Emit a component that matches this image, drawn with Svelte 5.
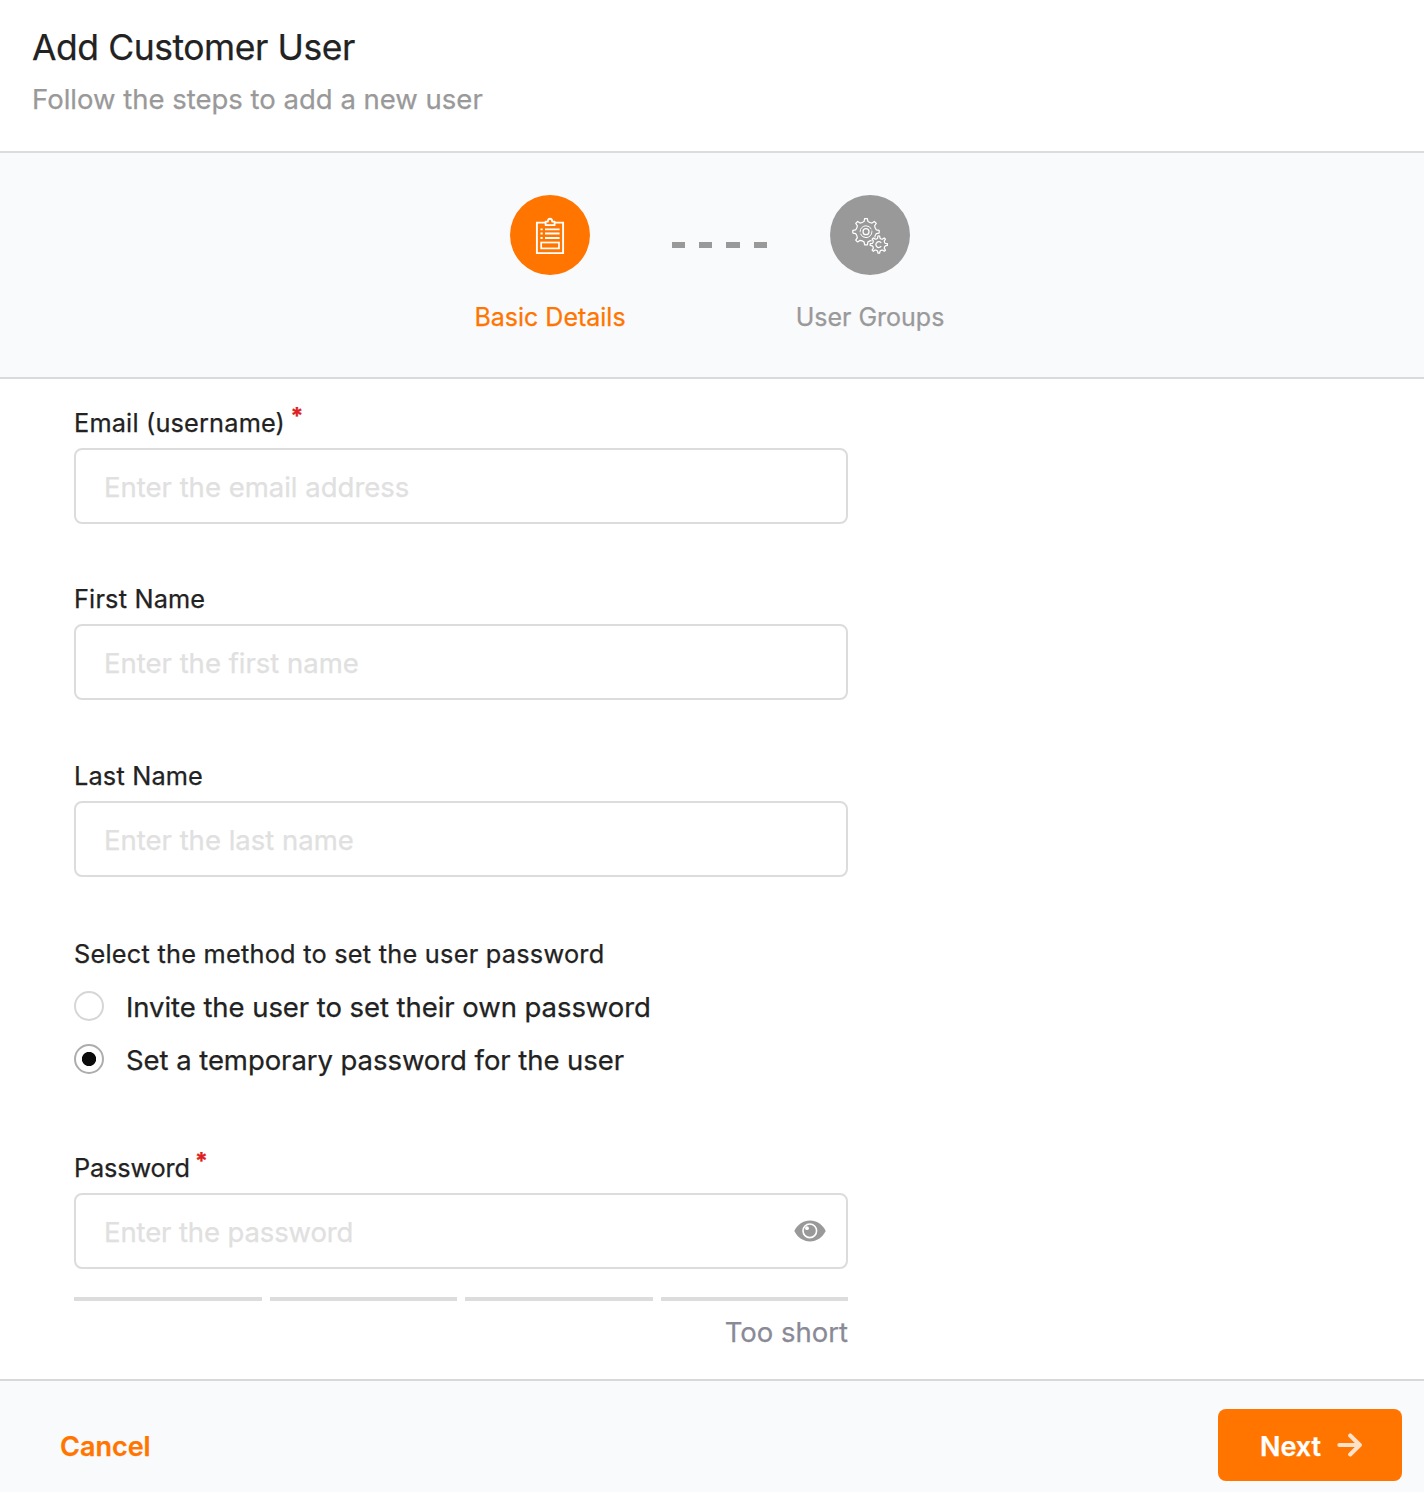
<script>
  const nameFields = [
    { id: 'email', label: 'Email (username)', required: true, hint: 'Enter the email address' },
    { id: 'first-name', label: 'First Name', required: false, hint: 'Enter the first name' },
    { id: 'last-name', label: 'Last Name', required: false, hint: 'Enter the last name' }
  ];

  const methods = [
    { value: 'invite', text: 'Invite the user to set their own password' },
    { value: 'temporary', text: 'Set a temporary password for the user' }
  ];

  let method = $state('temporary');

  // Outline of a cog with slightly tapered teeth.
  function gear(cx, cy, outer, root, teeth) {
    const step = (Math.PI * 2) / teeth;
    const at = (r, a) => `${(cx + r * Math.cos(a)).toFixed(2)} ${(cy + r * Math.sin(a)).toFixed(2)}`;
    let d = '';
    for (let i = 0; i < teeth; i++) {
      const a = i * step - Math.PI / 2;
      d += `${i ? 'L' : 'M'}${at(root + 0.4, a - step * 0.23)}L${at(outer, a - step * 0.13)}`;
      d += `A${outer} ${outer} 0 0 1 ${at(outer, a + step * 0.13)}L${at(root + 0.4, a + step * 0.23)}`;
      d += `Q${at(root - 0.6, a + step * 0.5)} ${at(root + 0.4, a + step * 0.77)}`;
    }
    return d + 'Z';
  }

  const bigGear = gear(36, 36.7, 13.2, 10.1, 8);
  const smallGear = gear(48.8, 49.6, 8.6, 6.3, 8);
</script>

<div class="dialog">
  <header>
    <h1>Add Customer User</h1>
    <p>Follow the steps to add a new user</p>
  </header>

  <nav class="steps">
    <div class="step active">
      <svg class="badge" viewBox="0 0 80 80" aria-hidden="true">
        <circle cx="40" cy="40" r="40" />
        <g fill="none" stroke="#fff" stroke-width="1.9">
          <path d="M35.5 27.6H26.9V58.1H53.1V27.6H44.8" />
          <path d="M35.6 30.2V26.6H37.9C37.900 22.800 42.200 22.800 42.200 26.600H44.600V30.200Z" stroke-width="1.8" stroke-linejoin="round" />
          <path d="M35 34.4H49.6M35 38.5H49.6M35 43H49.6" stroke-width="1.9" />
          <path d="M30.5 34.4H32.7M30.5 38.5H32.7M30.5 43H32.7" stroke-width="1.8" />
          <rect x="31.2" y="47.5" width="17.8" height="5.9" stroke-width="1.7" />
        </g>
      </svg>
      <span>Basic Details</span>
    </div>
    <div class="dashes"><i></i><i></i><i></i><i></i></div>
    <div class="step">
      <svg class="badge" viewBox="0 0 80 80" aria-hidden="true">
        <circle cx="40" cy="40" r="40" />
        <g fill="none" stroke="#fff" stroke-width="1.25" stroke-linejoin="round">
          <path d={bigGear} />
          <circle class="hollow" cx="36" cy="36.7" r="5.9" stroke-dasharray="16 1.5" stroke-width="1" />
          <circle class="hollow" cx="36" cy="36.7" r="3" />
          <path class="mask" d={smallGear} />
          <path d={smallGear} />
          <path d="M51.2 51.2A2.9 2.9 0 1 1 51.2 48" />
        </g>
      </svg>
      <span>User Groups</span>
    </div>
  </nav>

  <main>
    {#each nameFields as field}
      <div class="field">
        <label for={field.id}>{field.label}{#if field.required}<b>*</b>{/if}</label>
        <div class="box"><input id={field.id} placeholder={field.hint} /></div>
      </div>
    {/each}

    <div class="methods">
      <p>Select the method to set the user password</p>
      {#each methods as m}
        <label class="option {m.value}">
          <input type="radio" name="method" value={m.value} bind:group={method} />
          <span>{m.text}</span>
        </label>
      {/each}
    </div>

    <div class="field password">
      <label for="password">Password<b>*</b></label>
      <div class="box">
        <input id="password" type="password" placeholder="Enter the password" />
        <svg class="eye" viewBox="0 0 32 22" aria-hidden="true">
          <path d="M.3 11C3.6 4.4 9.4.6 16 .6S28.4 4.4 31.7 11C28.4 17.6 22.6 21.4 16 21.4S3.6 17.6.3 11Z" fill="#999" />
          <circle cx="15.8" cy="10.8" r="6.8" fill="none" stroke="#fff" stroke-width="1.6" />
          <circle cx="13" cy="8.2" r="1.9" fill="#fff" />
        </svg>
      </div>
    </div>

    <div class="strength"><i></i><i></i><i></i><i></i></div>
    <p class="verdict">Too short</p>
  </main>

  <footer>
    <button class="cancel">Cancel</button>
    <button class="next">
      Next
      <svg viewBox="0 0 26 24" aria-hidden="true">
        <path d="M2.4 12H22.5M13.2 2.6L22.8 12L13.2 21.4" />
      </svg>
    </button>
  </footer>
</div>

<style>
  :global(body) {
    background: #fff;
  }

  .dialog {
    display: flex;
    flex-direction: column;
    box-sizing: border-box;
    height: 1492px;
    font-family: Inter, 'Liberation Sans', sans-serif;
    font-size: 27.5px;
    color: #222;
    -webkit-text-stroke: 0.25px currentColor;
  }

  h1,
  p {
    margin: 0;
    font-weight: 400;
  }

  header {
    box-sizing: border-box;
    height: 153px;
    padding: 26px 32px 0;
    border-bottom: 2px solid #dcdcdc;
  }

  h1 {
    font-size: 35.5px;
    line-height: 44px;
    letter-spacing: -0.45px;
  }

  header p {
    margin: 11px 0 0;
    line-height: 36px;
    color: #999;
  }

  .steps {
    display: grid;
    grid-template-columns: 160px 160px 160px;
    justify-content: center;
    box-sizing: border-box;
    height: 226px;
    padding: 42px 4px 0 0;
    background: #f9fafc;
    border-bottom: 2px solid #d8dadd;
  }

  .step {
    display: flex;
    flex-direction: column;
    align-items: center;
    gap: 26px;
    font-size: 25px;
    line-height: 32px;
    color: #999;
    white-space: nowrap;
  }

  .step.active {
    color: #ff7500;
  }

  .badge {
    width: 80px;
    height: 80px;
    fill: currentColor;
  }

  .hollow {
    fill: none;
  }

  .mask {
    fill: #999;
    stroke: #999;
    stroke-width: 2.5;
  }

  .dashes {
    display: flex;
    gap: 14px;
    padding: 47px 0 0 42px;
  }

  .dashes i {
    width: 13.2px;
    height: 6px;
    background: #999;
  }

  main {
    flex: 1;
    width: 774px;
    padding: 28px 0 0 74px;
  }

  .field {
    margin-bottom: 59px;
  }

  .field:nth-child(2) {
    margin-bottom: 60px;
  }

  .field:nth-child(3) {
    margin-bottom: 61px;
  }

  .field label {
    display: flex;
    gap: 5.5px;
    height: 32px;
    margin-bottom: 9px;
    font-size: 25.3px;
    line-height: 32px;
    letter-spacing: 0.18px;
  }

  .field b {
    font-size: 23px;
    line-height: 18px;
    font-weight: 700;
    color: #e02020;
  }

  .box {
    display: flex;
    align-items: center;
    box-sizing: border-box;
    height: 76px;
    padding: 0 20px 0 28px;
    border: 2px solid #dcdcdc;
    border-radius: 8px;
  }

  .box input {
    flex: 1;
    min-width: 0;
    padding: 2px 0 0;
    border: 0;
    outline: 0;
    background: none;
    font: inherit;
    -webkit-text-stroke: inherit;
  }

  .box input::placeholder {
    color: #e0e0e0;
    opacity: 1;
    -webkit-text-stroke: 0.25px #e0e0e0;
  }

  .password input {
    letter-spacing: -0.12px;
  }

  .eye {
    width: 32px;
    height: 22px;
    margin-bottom: 1px;
  }

  .methods p {
    margin-bottom: 21px;
    font-size: 25.3px;
    line-height: 32px;
    letter-spacing: 0.25px;
  }

  .option {
    display: flex;
    align-items: center;
    gap: 22px;
    height: 30px;
    margin-bottom: 23px;
  }

  .option span {
    padding-top: 2px;
    line-height: 36px;
    letter-spacing: -0.06px;
  }

  .option input {
    appearance: none;
    box-sizing: border-box;
    width: 30px;
    height: 30px;
    margin: 0;
    border: 2px solid #d6d6d6;
    border-radius: 50%;
  }

  .option input:checked {
    border-color: #adadad;
    background: radial-gradient(circle, #0c0c0c 6.7px, transparent 7.5px);
  }

  .password {
    margin: 78px 0 28px;
  }

  .password label {
    gap: 5px;
    letter-spacing: -0.15px;
  }

  .strength {
    display: grid;
    grid-template-columns: repeat(4, 1fr);
    gap: 8px;
  }

  .strength i {
    height: 4px;
    background: #dcdcdc;
  }

  .verdict {
    margin-top: 11px;
    line-height: 40px;
    text-align: right;
    color: #8a8a97;
  }

  footer {
    display: flex;
    justify-content: space-between;
    box-sizing: border-box;
    height: 113px;
    padding: 28px 22px 0 18px;
    background: #f9fafc;
    border-top: 2px solid #d8d8d8;
  }

  button {
    display: flex;
    align-items: center;
    box-sizing: border-box;
    height: 72px;
    padding: 2px 42px 0;
    border: 0;
    border-radius: 8px;
    font: 600 27px Inter, 'Liberation Sans', sans-serif;
    -webkit-text-stroke: 0.25px currentColor;
  }

  .cancel {
    width: 175px;
    background: none;
    color: #ff7500;
  }

  .next {
    justify-content: space-between;
    width: 184px;
    padding-right: 39px;
    background: #ff7500;
    color: #fff;
    letter-spacing: -0.1px;
  }

  .next svg {
    width: 26px;
    height: 24px;
    margin-bottom: 2px;
    fill: none;
    stroke: #ffe0c8;
    stroke-width: 4.2;
    stroke-linecap: round;
    stroke-linejoin: round;
  }
</style>
